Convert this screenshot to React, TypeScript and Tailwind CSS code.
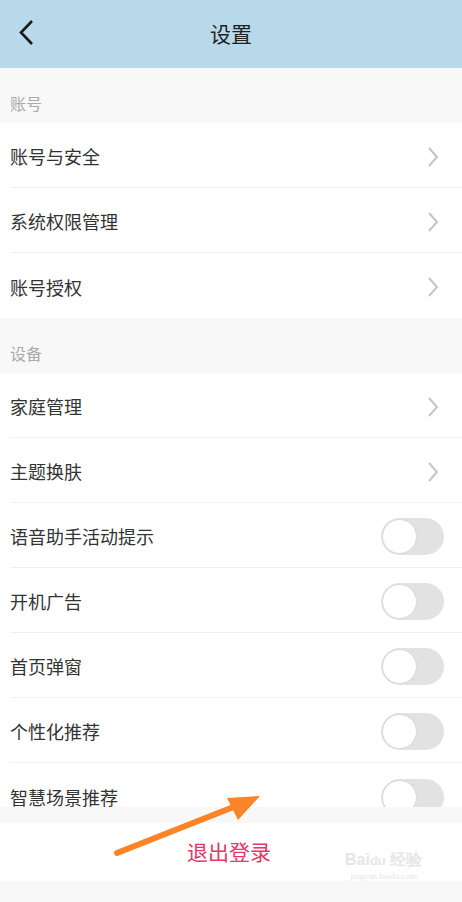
const font = { fontFamily: '"Noto Sans CJK SC", "Noto Sans", sans-serif' };

function Chevron() {
  return (
    <svg width="14" height="22" viewBox="0 0 14 22" className="mr-[22px]">
      <path d="M3 2 L11 11 L3 20" fill="none" stroke="#c4c4c4" strokeWidth="2" />
    </svg>
  );
}

function Toggle() {
  return (
    <div className="mr-[18px] flex h-[37px] w-[63px] items-center rounded-full bg-[#e2e2e2] p-[1px]">
      <div className="h-[35px] w-[35px] rounded-full border border-[#d8d8d8] bg-white" />
    </div>
  );
}

function Row({ label, kind, last }: { label: string; kind: "arrow" | "toggle"; last?: boolean }) {
  return (
    <div className="bg-white">
      <div className={`flex items-center justify-between pl-[10px] pt-[3px] ${last ? "h-[65px]" : "h-[64px]"}`}>
        <span className="text-[18px] text-[#333]">{label}</span>
        {kind === "arrow" ? <Chevron /> : <Toggle />}
      </div>
      {!last && <div className="ml-[10px] h-px bg-[#f0f0f0]" />}
    </div>
  );
}

function SectionLabel({ text }: { text: string }) {
  return (
    <div className="flex h-[55px] items-center bg-[#f8f8f8] pl-[10px] pt-[14px] text-[16px] text-[#aaa]">
      {text}
    </div>
  );
}

export default function App() {
  return (
    <div className="relative h-[902px] w-[462px] overflow-hidden bg-[#f8f8f8]" style={font}>
      <div className="flex h-[68px] items-center bg-[#b8d9ea]">
        <svg width="60" height="68" viewBox="0 0 60 68" className="shrink-0">
          <path d="M32 21 L21 32.5 L32 44" fill="none" stroke="#1a1a1a" strokeWidth="2.6" />
        </svg>
        <div className="flex-1 pr-[60px] text-center text-[21px] text-[#222]">设置</div>
      </div>

      <SectionLabel text="账号" />
      <Row label="账号与安全" kind="arrow" />
      <Row label="系统权限管理" kind="arrow" />
      <Row label="账号授权" kind="arrow" last />

      <SectionLabel text="设备" />
      <Row label="家庭管理" kind="arrow" />
      <Row label="主题换肤" kind="arrow" />
      <Row label="语音助手活动提示" kind="toggle" />
      <Row label="开机广告" kind="toggle" />
      <Row label="首页弹窗" kind="toggle" />
      <Row label="个性化推荐" kind="toggle" />
      <div className="h-[44px] overflow-hidden">
        <Row label="智慧场景推荐" kind="toggle" last />
      </div>

      <div className="h-[16px] bg-[#f8f8f8]" />
      <div className="flex h-[58px] items-center justify-center bg-white pr-[4px] text-[21px] text-[#ea3468]">
        退出登录
      </div>

      <svg
        className="absolute left-0 top-0"
        width="462"
        height="902"
        viewBox="0 0 462 902"
      >
        <line x1="117" y1="853" x2="236" y2="806" stroke="#fb8427" strokeWidth="6" strokeLinecap="round" />
        <polygon points="260,796 227,798 238,820" fill="#fb8427" />
      </svg>

      <div className="pointer-events-none absolute left-[345px] top-[852px] flex flex-col items-center leading-none text-[#e6e6e6]">
        <span className="text-[16px] font-bold" style={{ fontFamily: '"Liberation Sans", sans-serif' }}>
          Bai<span className="text-[13px]">du</span> 经验
        </span>
        <span className="mt-[4px] text-[9px]" style={{ fontFamily: '"Liberation Serif", serif' }}>
          jingyan.baidu.com
        </span>
      </div>
    </div>
  );
}
